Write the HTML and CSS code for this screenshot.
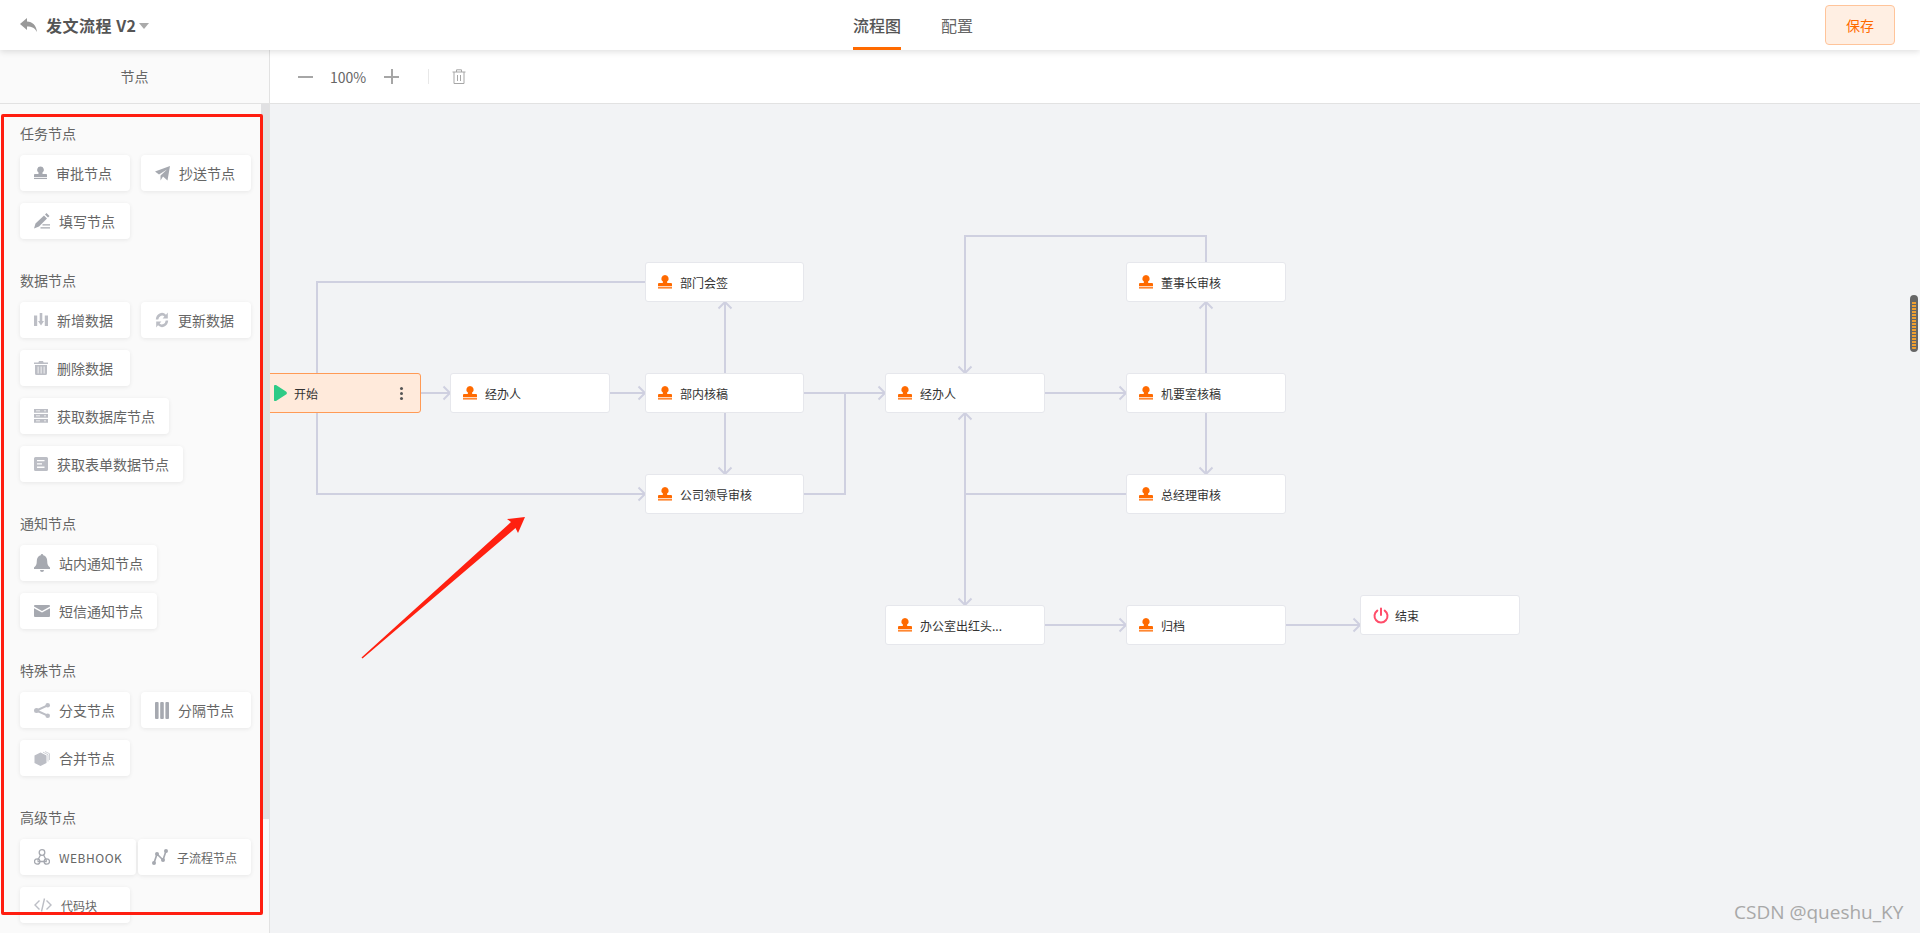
FILE: index.html
```html
<!DOCTYPE html>
<html lang="zh-CN">
<head>
    <meta charset="UTF-8">
    <title>发文流程 V2</title>
    <link rel="stylesheet" href="styles.css">
</head>
<body>
    <svg class="defs" width="0" height="0">
        <symbol id="stamp" viewBox="0 0 14 14">
            <path d="M7 0a3.700 3.700 0 0 1 2 6.800L9.300 8H13a1 1 0 0 1 1 1v2.200H0V9a1 1 0 0 1 1-1h3.700L5 6.800A3.700 3.700 0 0 1 7 0z"/>
            <rect y="12.200" width="14" height="1.300"/>
        </symbol>
    </svg>

    <header class="topbar">
        <div class="doc-title">
            <svg class="back" width="17" height="14" viewBox="0 0 17 14"><path d="M7 0v3.600c5.600.3 9.200 3.700 10 10.400-2-3.800-5-5.400-10-5.500V12L0 6z"/></svg>
            <span class="doc-name">发文流程 V2</span>
            <i class="caret"></i>
        </div>
        <nav class="tabs">
            <a class="tab active">流程图</a>
            <a class="tab">配置</a>
        </nav>
        <button class="save">保存</button>
    </header>

    <div class="main">
        <aside class="sidebar">
            <div class="side-head">节点</div>
            <div class="side-body">
                <i class="side-thumb"></i>

                <section class="group">
                    <h3>任务节点</h3>
                    <div class="items">
                        <a class="item"><svg width="13" height="14"><use href="#stamp"/></svg>审批节点</a>
                        <a class="item"><svg width="15" height="15" viewBox="0 0 15 15"><path d="M0 5.500 15 0l-2.500 14.500-4.500-4-2.500 4V9.500l6.500-6-8 5z"/></svg>抄送节点</a>
                        <a class="item"><svg width="16" height="16" viewBox="0 0 16 16"><path d="M12.500 0l3 3L14 4.500l-3-3zM10 2.500l3 3-8 8-5 2 1.500-5zM8.500 11.200H16v1.300H8.500zM6.500 14.200H16v1.300H6.500z"/></svg>填写节点</a>
                    </div>
                </section>

                <section class="group">
                    <h3>数据节点</h3>
                    <div class="items">
                        <a class="item light"><svg width="14" height="14" viewBox="0 0 14 14"><path d="M0 2.500h3.200V13H0zM10.800 2.500H14V13h-3.200zM5.700 0h2.600v8H10l-3 4.500L4 8h1.700z"/></svg>新增数据</a>
                        <a class="item light"><svg width="14" height="16" viewBox="0 0 14 14" preserveAspectRatio="none"><path d="M.8 6.500A6.200 6.200 0 0 1 11 2.300L12.800.5v5.200H7.600L9.400 3.900A3.800 3.800 0 0 0 3.300 6.500zM13.200 7.500A6.200 6.200 0 0 1 3 11.700L1.200 13.500V8.300h5.200L4.600 10.100A3.800 3.800 0 0 0 10.700 7.500z"/></svg>更新数据</a>
                        <a class="item light"><svg width="14" height="14" viewBox="0 0 14 14"><path d="M5 0h4l.6 1.500H14V3H0V1.500h4.400zM1 4h12v8.500A1.500 1.500 0 0 1 11.500 14h-9A1.500 1.500 0 0 1 1 12.500zm2.700 1.500v7h.8v-7zm3 0v7h.8v-7zm3 0v7h.8v-7z" fill-rule="evenodd"/></svg>删除数据</a>
                        <a class="item light"><svg width="14" height="14" viewBox="0 0 14 14"><path d="M0 0h14v3.800H0zM0 5h14v3.800H0zM0 10h14v3.800H0z"/><path class="cut" d="M2 1.500h4v.8H2zM2 6.500h4v.8H2zM2 11.500h4v.8H2zM10 1.500h2v.8h-2zM10 6.500h2v.8h-2zM10 11.500h2v.8h-2z"/></svg>获取数据库节点</a>
                        <a class="item light"><svg width="14" height="14" viewBox="0 0 14 14"><path d="M1.500 0h11A1.500 1.500 0 0 1 14 1.500v11a1.500 1.500 0 0 1-1.500 1.500h-11A1.500 1.500 0 0 1 0 12.500v-11A1.500 1.500 0 0 1 1.500 0z"/><path class="cut" d="M3 3h7.500v1.300H3zM3 6.300h5v1.300H3zM3 9.600h7.500v1.300H3z"/></svg>获取表单数据节点</a>
                    </div>
                </section>

                <section class="group">
                    <h3>通知节点</h3>
                    <div class="items">
                        <a class="item"><svg width="16" height="18" viewBox="0 0 16 18"><path d="M8 0a1.400 1.400 0 0 1 1.300 1.200C12 2 13.200 4.300 13.200 7c0 3.300.8 5 2.800 6.500V15H0v-1.500C2 12 2.800 10.300 2.800 7 2.800 4.300 4 2 6.700 1.200A1.400 1.400 0 0 1 8 0zM6 16h4a2 2 0 0 1-4 0z"/></svg>站内通知节点</a>
                        <a class="item"><svg width="16" height="12" viewBox="0 0 16 12"><path d="M1 0h14a1 1 0 0 1 1 1v.6L8 6 0 1.600V1a1 1 0 0 1 1-1zM0 3.200l8 4.400 8-4.400V11a1 1 0 0 1-1 1H1a1 1 0 0 1-1-1z"/></svg>短信通知节点</a>
                    </div>
                </section>

                <section class="group">
                    <h3>特殊节点</h3>
                    <div class="items">
                        <a class="item light"><svg width="16" height="15" viewBox="0 0 16 15"><circle cx="2.500" cy="7.500" r="2.500"/><circle cx="13.700" cy="2.300" r="2.300"/><circle cx="13.700" cy="12.700" r="2.300"/><path d="M2.500 7.500 13.700 2.300M2.500 7.500l11.200 5.200" stroke="currentColor" stroke-width="2" fill="none"/></svg>分支节点</a>
                        <a class="item"><svg width="14" height="17" viewBox="0 0 14 17"><rect width="3.600" height="17" rx="1"/><rect x="5.200" width="3.600" height="17" rx="1"/><rect x="10.400" width="3.600" height="17" rx="1"/></svg>分隔节点</a>
                        <a class="item light"><svg width="16" height="15" viewBox="0 0 16 15"><path d="M6.500 1.500l6 3V12l-6 3-6-3V4.500z"/><path d="M9 1.200 14 3.700V10.500M11 .5l4.500 2.200V9" fill="none" stroke="currentColor" stroke-width=".7"/></svg>合并节点</a>
                    </div>
                </section>

                <section class="group">
                    <h3>高级节点</h3>
                    <div class="items">
                        <a class="item small webhook"><svg class="outline" width="16" height="16" viewBox="0 0 16 16" stroke-width="1.300"><circle cx="8" cy="3.500" r="2.800"/><circle cx="3.200" cy="12.500" r="2.700"/><circle cx="12.800" cy="12.500" r="2.700"/><path d="M6.500 6 3.600 11.500M3.500 12.500h9.300M9.500 5.800l3 6"/></svg>WEBHOOK</a>
                        <a class="item small"><svg width="16" height="16" viewBox="0 0 16 16"><circle cx="2" cy="14" r="2"/><circle cx="5" cy="5" r="2"/><circle cx="11" cy="11" r="2"/><circle cx="14" cy="2" r="2"/><path d="M2 14 5 5l6 6 3-9" fill="none" stroke="currentColor" stroke-width="1.700"/></svg>子流程节点</a>
                        <a class="item small light"><svg class="outline" width="18" height="14" viewBox="0 0 18 14" stroke-width="1.400"><path d="M5.500 2.500 1 7l4.500 4.500M12.500 2.500 17 7l-4.500 4.500M10.500.5 7.500 13.500"/></svg>代码块</a>
                    </div>
                </section>
            </div>
        </aside>

        <div class="workspace">
            <div class="toolbar">
                <i class="tool-minus"></i>
                <span class="zoom-val">100%</span>
                <i class="tool-plus"></i>
                <i class="tool-sep"></i>
                <svg class="tool-trash" width="14" height="15" viewBox="0 0 14 15" fill="none" stroke="currentColor" stroke-width="1"><path d="M.5 3h13M4.500 3V.8h5V3M2 3v11.500h10V3M5.500 6v6M8.500 6v6"/></svg>
            </div>

            <div class="canvas">
                <svg class="edges" viewBox="270 104 1650 829">
                    <defs>
                        <marker id="head" markerUnits="userSpaceOnUse" markerWidth="10" markerHeight="16" refX="8" refY="8" orient="auto">
                            <path d="M1.500 1.500 8 8l-6.500 6.500" fill="none" stroke="#d9dae6" stroke-width="2"/>
                        </marker>
                    </defs>
                    <path d="M317 373V282H645"/>
                    <path d="M317 413V494H645" marker-end="url(#head)"/>
                    <path d="M420 393H450" marker-end="url(#head)"/>
                    <path d="M610 393H645" marker-end="url(#head)"/>
                    <path d="M725 373V302" marker-end="url(#head)"/>
                    <path d="M725 413V474" marker-end="url(#head)"/>
                    <path d="M804 393H885" marker-end="url(#head)"/>
                    <path d="M804 494H845V393"/>
                    <path d="M1206 262V236H965V373" marker-end="url(#head)"/>
                    <path d="M1045 393H1126" marker-end="url(#head)"/>
                    <path d="M1206 373V302" marker-end="url(#head)"/>
                    <path d="M1206 413V474" marker-end="url(#head)"/>
                    <path d="M1126 494H965"/>
                    <path d="M965 494V413" marker-end="url(#head)"/>
                    <path d="M965 494V605" marker-end="url(#head)"/>
                    <path d="M1045 625H1126" marker-end="url(#head)"/>
                    <path d="M1286 625H1360" marker-end="url(#head)"/>
                </svg>

                <div class="node start" style="left:-10px;top:269px">
                    <svg class="play" width="13" height="16" viewBox="0 0 13 16"><path d="M2 0 12 6.400a1.900 1.900 0 0 1 0 3.200L2 16a1.300 1.300 0 0 1-2-1.100V1.100A1.300 1.300 0 0 1 2 0z" fill="#2fcb86"/></svg>
                    <span class="node-text">开始</span>
                    <i class="dots"></i>
                </div>
                <div class="node" style="left:180px;top:269px"><svg class="stamp"><use href="#stamp"/></svg>经办人</div>
                <div class="node narrow" style="left:375px;top:158px"><svg class="stamp"><use href="#stamp"/></svg>部门会签</div>
                <div class="node narrow" style="left:375px;top:269px"><svg class="stamp"><use href="#stamp"/></svg>部内核稿</div>
                <div class="node narrow" style="left:375px;top:370px"><svg class="stamp"><use href="#stamp"/></svg>公司领导审核</div>
                <div class="node" style="left:615px;top:269px"><svg class="stamp"><use href="#stamp"/></svg>经办人</div>
                <div class="node" style="left:856px;top:158px"><svg class="stamp"><use href="#stamp"/></svg>董事长审核</div>
                <div class="node" style="left:856px;top:269px"><svg class="stamp"><use href="#stamp"/></svg>机要室核稿</div>
                <div class="node" style="left:856px;top:370px"><svg class="stamp"><use href="#stamp"/></svg>总经理审核</div>
                <div class="node" style="left:615px;top:501px"><svg class="stamp"><use href="#stamp"/></svg>办公室出红头...</div>
                <div class="node" style="left:856px;top:501px"><svg class="stamp"><use href="#stamp"/></svg>归档</div>
                <div class="node" style="left:1090px;top:491px">
                    <svg class="power" width="16" height="17" viewBox="0 0 16 17" fill="none" stroke="#ff4d6a" stroke-width="2" stroke-linecap="round"><path d="M8 1.500v6.500M4.300 3.600a6.500 6.500 0 1 0 7.400 0"/></svg>
                    结束
                </div>

                <i class="mini-handle"></i>
                <span class="watermark">CSDN @queshu_KY</span>
            </div>
        </div>
    </div>

    <!-- annotations drawn over the shot -->
    <div class="red-box"></div>
    <svg class="red-arrow" width="170" height="150" viewBox="360 515 170 150"><path d="M361.500 657.500 511 522 507 519 525 517 518 533 515.500 528 362.500 658.500z" fill="#ff2010"/></svg>
</body>
</html>
```

FILE: styles.css
```css
* {
    box-sizing: border-box;
}
html, body {
    height: 100%;
}
body {
    margin: 0;
    position: relative;
    overflow: hidden;
    font-family: "Noto Sans CJK SC", "Liberation Sans", sans-serif;
    color: #666;
    background-color: #fff;
    display: flex;
    flex-direction: column;
}
.defs {
    position: absolute;
}

/* top bar */
.topbar {
    height: 50px;
    flex: none;
    display: flex;
    align-items: center;
    padding: 0 25px 0 20px;
    background-color: #fff;
    box-shadow: 0 2px 6px rgba(0, 0, 0, 0.12);
    position: relative;
    z-index: 5;
}
.doc-title {
    flex: 1;
    display: flex;
    align-items: center;
}
.back {
    fill: #999;
    margin-right: 9px;
}
.doc-name {
    font-size: 16px;
    font-weight: bold;
    letter-spacing: 0.5px;
    color: #555;
}
.caret {
    width: 0;
    height: 0;
    margin: 2px 0 0 3px;
    border-left: 5px solid transparent;
    border-right: 5px solid transparent;
    border-top: 6px solid #aaa;
}
.tabs {
    position: absolute;
    left: 853px;
    top: 0;
    display: flex;
    gap: 40px;
}
.tab {
    height: 50px;
    line-height: 50px;
    font-size: 16px;
    color: #666;
}
.tab.active {
    color: #555;
    font-weight: 500;
    border-bottom: 3px solid #ff6a00;
}
.save {
    width: 70px;
    height: 40px;
    font-family: inherit;
    font-size: 14px;
    color: #ff6a00;
    background-color: #ffefe3;
    border: 1px solid #ffc49a;
    border-radius: 4px;
}

.main {
    flex: 1;
    display: flex;
    min-height: 0;
}

/* left panel */
.sidebar {
    width: 270px;
    flex: none;
    display: flex;
    flex-direction: column;
    background-color: #fafafa;
    border-right: 1px solid #e2e2e2;
}
.side-head {
    height: 54px;
    flex: none;
    line-height: 53px;
    text-align: center;
    font-size: 14px;
    border-bottom: 1px solid #e2e2e2;
}
.side-body {
    position: relative;
    flex: 1;
    overflow: hidden;
    padding: 19px 18px 0 20px;
}
.side-thumb {
    position: absolute;
    right: 0;
    top: 0;
    width: 8px;
    height: 715px;
    background-color: #e1e1e3;
}
.group {
    margin-bottom: 31px;
}
.group h3 {
    margin: 0 0 12px;
    font-size: 14px;
    font-weight: normal;
    line-height: 20px;
    color: #666;
}
.items {
    display: flex;
    flex-wrap: wrap;
    justify-content: space-between;
    row-gap: 12px;
}
.item {
    min-width: 110px;
    height: 36px;
    padding: 0 14px;
    display: flex;
    align-items: center;
    gap: 9px;
    font-size: 14px;
    color: #666;
    background-color: #fff;
    border-radius: 4px;
    box-shadow: 0 1px 4px rgba(0, 0, 0, 0.08);
}
.item svg {
    flex: none;
    fill: #a6a9b0;
    color: #a6a9b0;
}
.item.light svg {
    fill: #bcbec5;
    color: #bcbec5;
}
.item svg.outline {
    fill: none;
    stroke: currentColor;
}
.item .cut {
    fill: #fff;
}
.item.small {
    font-size: 12px;
}
.item.webhook {
    letter-spacing: 0.5px;
}

/* canvas */
.workspace {
    flex: 1;
    display: flex;
    flex-direction: column;
    min-width: 0;
}
.toolbar {
    height: 54px;
    flex: none;
    display: flex;
    align-items: center;
    padding-left: 28px;
    border-bottom: 1px solid #e2e2e2;
    background-color: #fff;
}
.tool-minus {
    width: 15px;
    height: 2px;
    background-color: #a6a6a6;
}
.zoom-val {
    margin: 0 18px 0 17px;
    font-size: 14px;
    color: #666;
}
.tool-plus {
    position: relative;
    width: 15px;
    height: 2px;
    background-color: #a6a6a6;
}
.tool-plus::after {
    content: "";
    position: absolute;
    left: 6.500px;
    top: -6.500px;
    width: 2px;
    height: 15px;
    background-color: #a6a6a6;
}
.tool-sep {
    width: 1px;
    height: 15px;
    margin: 0 23px 0 29px;
    background-color: #e8e8e8;
}
.tool-trash {
    color: #a6a6a6;
}
.canvas {
    position: relative;
    flex: 1;
    overflow: hidden;
    background-color: #f2f3f5;
}
.edges {
    position: absolute;
    left: 0;
    top: 0;
    width: 1650px;
    height: 829px;
}
.edges path {
    fill: none;
    stroke: #cfd0e0;
    stroke-width: 2;
}
.node {
    position: absolute;
    width: 160px;
    height: 40px;
    padding-left: 12px;
    display: flex;
    align-items: center;
    gap: 8px;
    font-size: 12px;
    color: #333;
    background-color: #fff;
    border: 1px solid #e6e7ec;
    border-radius: 3px;
}
.node.narrow {
    width: 159px;
}
.stamp {
    width: 14px;
    height: 14px;
    fill: #ff6a00;
}
.node.start {
    width: 161px;
    padding-left: 13px;
    background-color: #ffeadb;
    border-color: #ff9a55;
}
.play {
    margin-right: -1px;
}
.power {
    margin-right: -2px;
}
.node-text {
    flex: 1;
}
.dots {
    width: 3px;
    height: 3px;
    margin-right: 17px;
    border-radius: 50%;
    background-color: #555;
    box-shadow: 0 -5px 0 #555, 0 5px 0 #555;
}
.mini-handle {
    position: absolute;
    left: 1640px;
    top: 191px;
    width: 8px;
    height: 57px;
    border-radius: 4px;
    border: 2px solid #666;
    border-top-width: 7px;
    background: repeating-linear-gradient(#f0a030 0 2px, #666 2px 3px);
}
.watermark {
    position: absolute;
    left: 1464px;
    top: 795px;
    font-family: "Open Sans", sans-serif;
    font-size: 19px;
    line-height: 26px;
    color: #a8a8a8;
}

/* red annotations */
.red-box {
    position: absolute;
    left: 1px;
    top: 114px;
    width: 262px;
    height: 801px;
    border: 3px solid #ff1e10;
    border-radius: 2px;
    z-index: 6;
}
.red-arrow {
    position: absolute;
    left: 360px;
    top: 515px;
    z-index: 6;
}
```
